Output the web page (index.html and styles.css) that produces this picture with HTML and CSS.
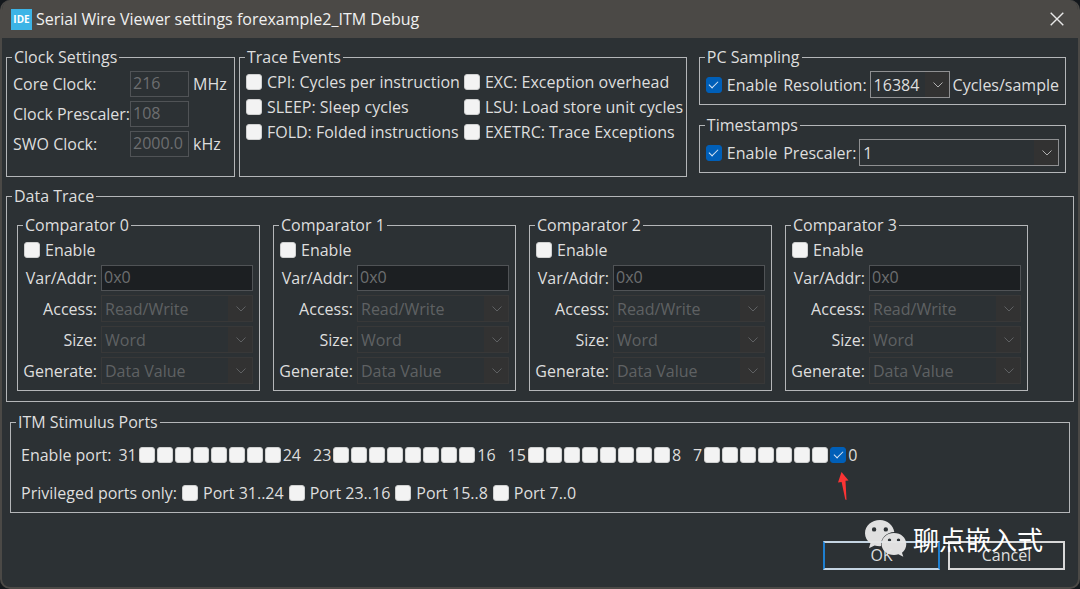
FILE: index.html
```html
<!DOCTYPE html>
<html lang="en">
<head>
<meta charset="utf-8">
<title>Serial Wire Viewer settings</title>
<link rel="stylesheet" href="styles.css">
</head>
<body>
<svg class="defs" aria-hidden="true">
  <symbol id="chevron" viewBox="0 0 10 6"><path d="M0.5 0.5 5 5 9.5 0.5" fill="none" stroke="currentColor"/></symbol>
</svg>
<main class="window">
  <header class="titlebar">
    <span class="app-icon">IDE</span>
    <h1 class="title">Serial Wire Viewer settings forexample2_ITM Debug</h1>
    <button class="close" aria-label="Close"><svg viewBox="0 0 14 14"><path d="M0.7 0.7 13.3 13.3M13.3 0.7 0.7 13.3" fill="none" stroke="currentColor" stroke-width="1.4"/></svg></button>
  </header>

  <form class="content">
    <div class="top-row">
      <fieldset class="group">
        <legend>Clock Settings</legend>
        <div class="clock-grid">
          <label for="core">Core Clock:</label><input class="field" id="core" value="216" disabled><span>MHz</span>
          <label for="presc">Clock Prescaler:</label><input class="field" id="presc" value="108" disabled><span></span>
          <label for="swo">SWO Clock:</label><input class="field" id="swo" value="2000.0" disabled><span>kHz</span>
        </div>
      </fieldset>

      <fieldset class="group">
        <legend>Trace Events</legend>
        <div class="events-grid">
          <label class="check"><input type="checkbox">CPI: Cycles per instruction</label>
          <label class="check"><input type="checkbox">EXC: Exception overhead</label>
          <label class="check"><input type="checkbox">SLEEP: Sleep cycles</label>
          <label class="check"><input type="checkbox">LSU: Load store unit cycles</label>
          <label class="check"><input type="checkbox">FOLD: Folded instructions</label>
          <label class="check"><input type="checkbox">EXETRC: Trace Exceptions</label>
        </div>
      </fieldset>

      <div class="side">
        <fieldset class="group">
          <legend>PC Sampling</legend>
          <div class="line">
            <label class="check"><input type="checkbox" checked>Enable</label>
            <label class="after-check" for="res">Resolution:</label>
            <span class="combo combo-short"><select id="res"><option>16384</option></select><svg><use href="#chevron"/></svg></span>
            <span>Cycles/sample</span>
          </div>
        </fieldset>
        <fieldset class="group">
          <legend>Timestamps</legend>
          <div class="line">
            <label class="check"><input type="checkbox" checked>Enable</label>
            <label class="after-check" for="tsp">Prescaler:</label>
            <span class="combo combo-fill"><select id="tsp"><option>1</option></select><svg><use href="#chevron"/></svg></span>
          </div>
        </fieldset>
      </div>
    </div>

    <fieldset class="group">
      <legend>Data Trace</legend>
      <div class="comparators">
        <fieldset class="group">
          <legend>Comparator 0</legend>
          <label class="check cmp-enable"><input type="checkbox">Enable</label>
          <div class="cmp-grid">
            <label for="a0">Var/Addr:</label><input class="field field-dark" id="a0" value="0x0" disabled>
            <label for="b0">Access:</label><span class="combo"><select id="b0" disabled><option>Read/Write</option></select><svg><use href="#chevron"/></svg></span>
            <label for="c0">Size:</label><span class="combo"><select id="c0" disabled><option>Word</option></select><svg><use href="#chevron"/></svg></span>
            <label for="d0">Generate:</label><span class="combo"><select id="d0" disabled><option>Data Value</option></select><svg><use href="#chevron"/></svg></span>
          </div>
        </fieldset>
        <fieldset class="group">
          <legend>Comparator 1</legend>
          <label class="check cmp-enable"><input type="checkbox">Enable</label>
          <div class="cmp-grid">
            <label for="a1">Var/Addr:</label><input class="field field-dark" id="a1" value="0x0" disabled>
            <label for="b1">Access:</label><span class="combo"><select id="b1" disabled><option>Read/Write</option></select><svg><use href="#chevron"/></svg></span>
            <label for="c1">Size:</label><span class="combo"><select id="c1" disabled><option>Word</option></select><svg><use href="#chevron"/></svg></span>
            <label for="d1">Generate:</label><span class="combo"><select id="d1" disabled><option>Data Value</option></select><svg><use href="#chevron"/></svg></span>
          </div>
        </fieldset>
        <fieldset class="group">
          <legend>Comparator 2</legend>
          <label class="check cmp-enable"><input type="checkbox">Enable</label>
          <div class="cmp-grid">
            <label for="a2">Var/Addr:</label><input class="field field-dark" id="a2" value="0x0" disabled>
            <label for="b2">Access:</label><span class="combo"><select id="b2" disabled><option>Read/Write</option></select><svg><use href="#chevron"/></svg></span>
            <label for="c2">Size:</label><span class="combo"><select id="c2" disabled><option>Word</option></select><svg><use href="#chevron"/></svg></span>
            <label for="d2">Generate:</label><span class="combo"><select id="d2" disabled><option>Data Value</option></select><svg><use href="#chevron"/></svg></span>
          </div>
        </fieldset>
        <fieldset class="group">
          <legend>Comparator 3</legend>
          <label class="check cmp-enable"><input type="checkbox">Enable</label>
          <div class="cmp-grid">
            <label for="a3">Var/Addr:</label><input class="field field-dark" id="a3" value="0x0" disabled>
            <label for="b3">Access:</label><span class="combo"><select id="b3" disabled><option>Read/Write</option></select><svg><use href="#chevron"/></svg></span>
            <label for="c3">Size:</label><span class="combo"><select id="c3" disabled><option>Word</option></select><svg><use href="#chevron"/></svg></span>
            <label for="d3">Generate:</label><span class="combo"><select id="d3" disabled><option>Data Value</option></select><svg><use href="#chevron"/></svg></span>
          </div>
        </fieldset>
      </div>
    </fieldset>

    <fieldset class="group itm">
      <legend>ITM Stimulus Ports</legend>
      <div class="ports">
        <span>Enable port:</span>
        <div class="banks">
        <span class="bank">31<span class="boxes"><input type="checkbox" aria-label="Port 31"><input type="checkbox" aria-label="Port 30"><input type="checkbox" aria-label="Port 29"><input type="checkbox" aria-label="Port 28"><input type="checkbox" aria-label="Port 27"><input type="checkbox" aria-label="Port 26"><input type="checkbox" aria-label="Port 25"><input type="checkbox" aria-label="Port 24"></span>24</span>
        <span class="bank">23<span class="boxes"><input type="checkbox" aria-label="Port 23"><input type="checkbox" aria-label="Port 22"><input type="checkbox" aria-label="Port 21"><input type="checkbox" aria-label="Port 20"><input type="checkbox" aria-label="Port 19"><input type="checkbox" aria-label="Port 18"><input type="checkbox" aria-label="Port 17"><input type="checkbox" aria-label="Port 16"></span>16</span>
        <span class="bank">15<span class="boxes"><input type="checkbox" aria-label="Port 15"><input type="checkbox" aria-label="Port 14"><input type="checkbox" aria-label="Port 13"><input type="checkbox" aria-label="Port 12"><input type="checkbox" aria-label="Port 11"><input type="checkbox" aria-label="Port 10"><input type="checkbox" aria-label="Port 9"><input type="checkbox" aria-label="Port 8"></span>8</span>
        <span class="bank">7<span class="boxes"><input type="checkbox" aria-label="Port 7"><input type="checkbox" aria-label="Port 6"><input type="checkbox" aria-label="Port 5"><input type="checkbox" aria-label="Port 4"><input type="checkbox" aria-label="Port 3"><input type="checkbox" aria-label="Port 2"><input type="checkbox" aria-label="Port 1"><span class="marked"><input type="checkbox" aria-label="Port 0" checked><svg class="arrow" viewBox="0 0 11 28"><path d="M3.5 0 10.5 8.5 7.5 8.8 8.5 28 7.3 27.5 3.6 10 0 10.5Z" fill="#fb3434"/></svg></span></span>0</span>
        </div>
      </div>
      <div class="privileged">
        <span>Privileged ports only:</span>
        <label class="check"><input type="checkbox">Port 31..24</label>
        <label class="check"><input type="checkbox">Port 23..16</label>
        <label class="check"><input type="checkbox">Port 15..8</label>
        <label class="check"><input type="checkbox">Port 7..0</label>
      </div>
    </fieldset>

    <footer class="actions">
      <button type="button" class="btn btn-default">OK</button>
      <button type="button" class="btn">Cancel</button>
      <div class="watermark">
        <svg viewBox="0 0 42 38">
          <path fill="#e6e6e6" fill-rule="evenodd" d="M15 0C6.700 0 0 5.800 0 13.200 0 17.300 2.100 20.900 5.400 23.300L4 28.200 9.600 25.400C11.300 25.900 13.100 26.200 15 26.200L16 26.100C15.300 18.500 21.500 12 29.300 12 28.300 5.200 22.300 0 15 0ZM9.100 7.200A2.200 2.200 0 1 1 9.100 11.600 2.200 2.200 0 1 1 9.100 7.200ZM20.800 7.200A2.200 2.200 0 1 1 20.800 11.600 2.200 2.200 0 1 1 20.800 7.200Z"/>
          <path fill="#e6e6e6" fill-rule="evenodd" d="M29 13C22 13 16.500 17.900 16.500 24 16.500 30.200 22 35 29 35 30.600 35 32 34.800 33.400 34.300L38.300 36.700 37 32.700C39.700 30.700 41.300 27.600 41.300 24 41.300 17.900 36 13 29 13ZM24.500 18.400A1.700 1.700 0 1 1 24.500 21.800 1.700 1.700 0 1 1 24.500 18.400ZM33.500 18.400A1.700 1.700 0 1 1 33.500 21.800 1.700 1.700 0 1 1 33.500 18.400Z"/>
        </svg>
        <span lang="zh-CN">聊点嵌入式</span>
      </div>
    </footer>
  </form>
</main>
</body>
</html>
```
FILE: styles.css
```css
* { box-sizing: border-box; }

body {
  margin: 0;
  background: #14181c;
  color: #dedede;
  font: 16px/22px "Open Sans", "Noto Sans", "Noto Sans CJK SC", sans-serif;
}

input, select, button { font: inherit; color: inherit; margin: 0; border-radius: 0; }
.defs { display: none; }

.window {
  min-height: 100vh;
  display: flex;
  flex-direction: column;
  border: 2px solid #4b4946;
  border-top: 0;
  border-radius: 10px;
  background: #2c3134;
  overflow: hidden;
}

.titlebar {
  display: flex;
  align-items: center;
  gap: 4px;
  height: 38px;
  padding: 0 14px 0 9px;
  background: #4b4946;
}
.app-icon {
  width: 21px;
  height: 21px;
  background: #3cb4e6;
  color: #fff;
  font: bold 10px/20px "Open Sans", sans-serif;
  text-align: center;
}
.title { flex: 1; margin: 0; font-size: 16px; font-weight: 400; color: #f0f0f0; }
.close { padding: 0; border: 0; background: none; color: #e8e8e8; display: flex; }
.close svg { width: 14px; height: 14px; }

.content {
  flex: 1;
  display: flex;
  flex-direction: column;
  gap: 8px;
  padding: 8px 4px 0;
}

.group { min-width: 0; margin: 0; padding: 0 6px; border: 1px solid #b4b6b8; }
.group > legend { padding: 0 2px; margin-left: -1px; white-space: nowrap; }

.top-row {
  display: grid;
  grid-template-columns: 229fr 448fr 375fr;
  gap: 4px;
  padding-right: 8px;
}
.side { display: flex; flex-direction: column; gap: 9px; padding-left: 8px; }
.side .group { height: 59px; }

.clock-grid {
  display: grid;
  grid-template-columns: 113px 59px 1fr;
  grid-auto-rows: 26px;
  gap: 4px;
  align-items: center;
  padding: 3px 0 19px;
  white-space: nowrap;
}
.field {
  width: 100%;
  height: 26px;
  padding: 0 2px 2px;
  border: 1px solid #505356;
  background: #2c3134;
  color: #6c6e70;
}
.field-dark { background: #1c1f22; }

.events-grid {
  display: grid;
  grid-template-columns: 218px 1fr;
  grid-auto-rows: 25px;
  padding-top: 1px;
}

.check { display: flex; align-items: center; gap: 5px; white-space: nowrap; }
input[type="checkbox"] {
  appearance: none;
  flex: none;
  display: grid;
  place-items: center;
  width: 16px;
  height: 16px;
  border: 1px solid #cfd0d0;
  border-radius: 3px;
  background: #f3f3f3;
}
input[type="checkbox"]:checked { border-color: #005fb8; background: #005fb8; }
input[type="checkbox"]:checked::before {
  content: "";
  width: 8px;
  height: 4px;
  margin-bottom: 3px;
  border: solid #d8e6f4;
  border-width: 0 0 1px 1px;
  transform: rotate(-45deg);
}

.line { display: flex; align-items: center; gap: 3px; padding-top: 3px; white-space: nowrap; }
.after-check { margin-left: 3px; }

.combo { display: grid; align-items: center; min-width: 0; color: #dedede; }
.combo > * { grid-area: 1 / 1; }
.combo select {
  appearance: none;
  width: 100%;
  height: 27px;
  padding: 0 24px 0 3px;
  border: 1px solid #8f9092;
  background: linear-gradient(to left, #323232 24px, #2c3134 24px);
}
.combo svg { justify-self: end; width: 10px; height: 6px; margin-right: 7px; pointer-events: none; color: #b0b0b0; }
.combo select:disabled { opacity: 1; color: #5f6163; border-color: #383838; }
.combo select:disabled + svg { color: #5f6163; }
.combo-short { width: 80px; }
.combo-fill { flex: 1; }

.comparators {
  display: grid;
  grid-template-columns: repeat(4, 1fr);
  gap: 13px;
  padding: 7px 39px 10px 4px;
}
.cmp-enable { height: 28px; }
.cmp-grid {
  display: grid;
  grid-template-columns: 73px 1fr;
  grid-auto-rows: 27px;
  gap: 4px;
  align-items: center;
  padding-bottom: 6px;
}
.cmp-grid label { justify-self: end; white-space: nowrap; }

.itm { margin: 1px 4px 0; padding: 0 10px; }
.itm > legend { margin-left: -5px; }
.ports, .banks, .privileged { display: flex; align-items: center; white-space: nowrap; }
.ports { gap: 7px; padding: 11px 0 16px; }
.banks { gap: 12px; }
.privileged { gap: 5px; padding-bottom: 8px; }
.bank { display: flex; align-items: center; gap: 2px; }
.boxes { display: flex; gap: 2px; }
.marked { position: relative; display: flex; }
.arrow { position: absolute; top: 25px; left: 8px; width: 11px; height: 28px; }

.actions {
  position: relative;
  display: flex;
  justify-content: flex-end;
  gap: 8px;
  padding: 20px 9px 16px;
}
.btn { width: 117px; height: 29px; padding: 0 0 2px; border: 2px solid #d8d8d8; background: #2c3134; line-height: 22px; }
.btn-default { border-color: #c4d4e2 #1e7fd0; }
.watermark {
  position: absolute;
  right: 31px;
  top: -1px;
  display: flex;
  align-items: center;
  gap: 6px;
  color: #fff;
  font: 26px/38px "Noto Sans CJK SC", sans-serif;
  pointer-events: none;
}
.watermark svg { width: 42px; height: 38px; opacity: 0.97; }
```
